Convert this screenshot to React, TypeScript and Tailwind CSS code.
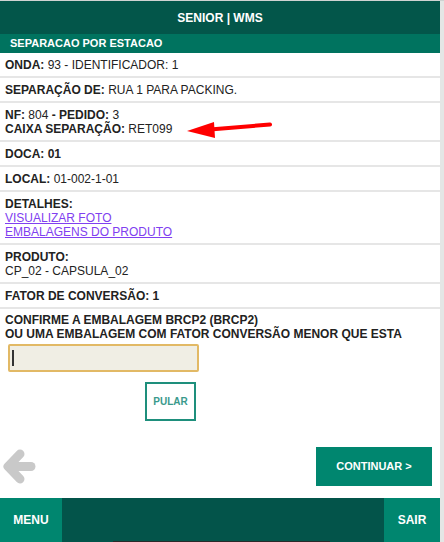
import React from "react";

const Row = ({ children }: { children: React.ReactNode }) => (
  <div className="pl-[5px] pr-2 pt-[5px] pb-[4px] border-b-2 border-[#e6e6e6] leading-[14px]">{children}</div>
);

export default function App() {
  return (
    <div
      className="w-[444px] h-[542px] flex bg-white text-[12px] text-[#222] overflow-hidden border-t border-[#cfd3d2]"
      style={{ fontFamily: '"Liberation Sans", Arial, sans-serif' }}
    >
      <div className="w-[440px] flex flex-col">
        <div className="h-[33px] bg-[#03564a] text-white font-bold flex items-center justify-center text-[12px]">
          SENIOR | WMS
        </div>
        <div className="h-[19px] bg-[#00735f] text-white font-bold text-[11px] flex items-center pl-[10px]">
          SEPARACAO POR ESTACAO
        </div>
        <Row>
          <b>ONDA:</b> 93 - IDENTIFICADOR: 1
        </Row>
        <Row>
          <b>SEPARAÇÃO DE:</b> RUA 1 PARA PACKING.
        </Row>
        <div className="relative">
          <Row>
            <div>
              <b>NF:</b> 804 <b>- PEDIDO:</b> 3
            </div>
            <div>
              <b>CAIXA SEPARAÇÃO:</b> RET099
            </div>
          </Row>
          <svg className="absolute left-[184px] top-[14px]" width="92" height="22" viewBox="0 0 92 22">
            <line x1="26" y1="12.5" x2="86" y2="7.5" stroke="#f00" strokeWidth="4" strokeLinecap="round" />
            <polygon points="3,14 30,5 31,21" fill="#f00" />
          </svg>
        </div>
        <Row>
          <b>DOCA: 01</b>
        </Row>
        <Row>
          <b>LOCAL:</b> 01-002-1-01
        </Row>
        <Row>
          <div>
            <b>DETALHES:</b>
          </div>
          <div>
            <a className="underline text-[#8040f0]">VISUALIZAR FOTO</a>
          </div>
          <div>
            <a className="underline text-[#8040f0]">EMBALAGENS DO PRODUTO</a>
          </div>
        </Row>
        <Row>
          <div>
            <b>PRODUTO:</b>
          </div>
          <div>CP_02 - CAPSULA_02</div>
        </Row>
        <Row>
          <b>FATOR DE CONVERSÃO: 1</b>
        </Row>
        <div className="pl-[5px] pt-[4px] leading-[14px] font-bold">
          <div>CONFIRME A EMBALAGEM BRCP2 (BRCP2)</div>
          <div>OU UMA EMBALAGEM COM FATOR CONVERSÃO MENOR QUE ESTA</div>
        </div>
        <div className="ml-[8px] mt-[3px] w-[191px] h-[28px] bg-[#f0eee4] border-2 border-[#e2b965] rounded-[2px] flex items-center pl-[2px]">
          <div className="w-[1.5px] h-[16px] bg-[#333]" />
        </div>
        <div className="ml-[145px] mt-[10px] w-[51px] h-[39px] border-2 border-[#1e8f7c] flex items-center justify-center text-[#3a9a8c] font-bold text-[10px]">
          PULAR
        </div>
        <div className="mt-[26px] flex items-center justify-between pr-[8px]">
          <svg className="ml-[2px]" width="36" height="36" viewBox="0 0 36 36">
            <g stroke="#c9c9c9" strokeWidth="9" strokeLinecap="round" strokeLinejoin="round" fill="none">
              <polyline points="18,5 6,17.5 18,30" />
              <line x1="7" y1="17.5" x2="29" y2="17.5" />
            </g>
          </svg>
          <div className="w-[116px] h-[39px] bg-[#00866f] text-white font-bold text-[11px] flex items-center justify-center">
            CONTINUAR &gt;
          </div>
        </div>
        <div className="mt-[12px] h-[44px] flex">
          <div className="w-[62px] bg-[#00866f] text-white font-bold text-[12px] flex items-center justify-center">
            MENU
          </div>
          <div className="flex-1 bg-[#03544a] flex flex-col justify-end">
            <div className="ml-[51px] w-[217px] h-[1px] bg-[#2a2a2a]" />
          </div>
          <div className="w-[56px] bg-[#00866f] text-white font-bold text-[12px] flex items-center justify-center">
            SAIR
          </div>
        </div>
      </div>
      <div className="w-[4px] bg-[#e4e6e5]" />
    </div>
  );
}
